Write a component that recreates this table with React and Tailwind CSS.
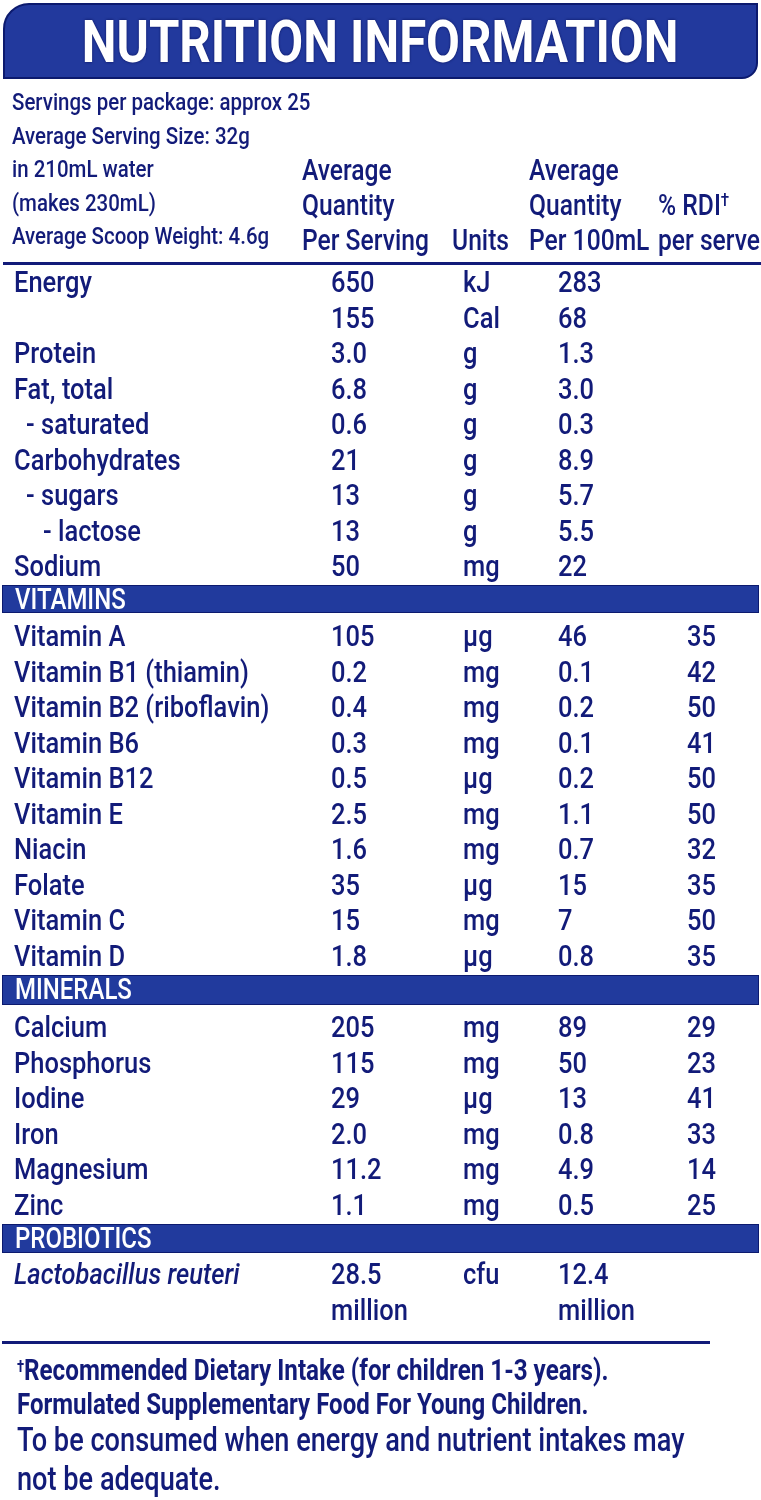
import React from "react";

const ROWS = [
  { label: "Energy", q: "650", u: "kJ", p: "283" },
  { label: "", q: "155", u: "Cal", p: "68" },
  { label: "Protein", q: "3.0", u: "g", p: "1.3" },
  { label: "Fat, total", q: "6.8", u: "g", p: "3.0" },
  { label: "- saturated", q: "0.6", u: "g", p: "0.3", indent: 1 },
  { label: "Carbohydrates", q: "21", u: "g", p: "8.9" },
  { label: "- sugars", q: "13", u: "g", p: "5.7", indent: 1 },
  { label: "- lactose", q: "13", u: "g", p: "5.5", indent: 2 },
  { label: "Sodium", q: "50", u: "mg", p: "22" },
];

const VITAMINS = [
  { label: "Vitamin A", q: "105", u: "µg", p: "46", r: "35" },
  { label: "Vitamin B1 (thiamin)", q: "0.2", u: "mg", p: "0.1", r: "42" },
  { label: "Vitamin B2 (riboflavin)", q: "0.4", u: "mg", p: "0.2", r: "50" },
  { label: "Vitamin B6", q: "0.3", u: "mg", p: "0.1", r: "41" },
  { label: "Vitamin B12", q: "0.5", u: "µg", p: "0.2", r: "50" },
  { label: "Vitamin E", q: "2.5", u: "mg", p: "1.1", r: "50" },
  { label: "Niacin", q: "1.6", u: "mg", p: "0.7", r: "32" },
  { label: "Folate", q: "35", u: "µg", p: "15", r: "35" },
  { label: "Vitamin C", q: "15", u: "mg", p: "7", r: "50" },
  { label: "Vitamin D", q: "1.8", u: "µg", p: "0.8", r: "35" },
];

const MINERALS = [
  { label: "Calcium", q: "205", u: "mg", p: "89", r: "29" },
  { label: "Phosphorus", q: "115", u: "mg", p: "50", r: "23" },
  { label: "Iodine", q: "29", u: "µg", p: "13", r: "41" },
  { label: "Iron", q: "2.0", u: "mg", p: "0.8", r: "33" },
  { label: "Magnesium", q: "11.2", u: "mg", p: "4.9", r: "14" },
  { label: "Zinc", q: "1.1", u: "mg", p: "0.5", r: "25" },
];

// narrow text: the label face is a condensed DIN, so squeeze Roboto sideways
const T = ({ children, s = "scale-x-[0.85]", className = "" }) => (
  <span className={`inline-block origin-left whitespace-nowrap ${s} ${className}`}>
    {children}
  </span>
);

const Row = ({ row }) => {
  const pad = row.indent === 2 ? "pl-[29px]" : row.indent === 1 ? "pl-[12px]" : "";
  return (
    <div className="grid h-[35.5px] grid-cols-[317px_132px_95px_129px_1fr] pl-[14px] text-[30px] leading-[35.5px]">
      <div className={pad}>
        <T>{row.label}</T>
      </div>
      <div>
        <T>{row.q}</T>
      </div>
      <div>
        <T>{row.u}</T>
      </div>
      <div>
        <T>{row.p}</T>
      </div>
      <div>
        <T>{row.r}</T>
      </div>
    </div>
  );
};

const Bar = ({ title, h }) => (
  <div className={`mx-[2px] ${h} border-[1.5px] border-[#0c1a6e] bg-[#213a9d] pl-[12px] text-[30px] leading-[26px] text-white`}>
    <T s="scale-x-[0.8]">{title}</T>
  </div>
);

export default function App() {
  return (
    <div className="h-[1500px] w-[761px] overflow-hidden bg-white font-medium font-[family-name:Roboto,sans-serif] text-[#121b79]">
      {/* title banner */}
      <div className="mx-[3px] mt-[3px] flex h-[76px] items-center justify-center rounded-tl-[26px] rounded-br-[16px] border-2 border-[#0c1a6e] bg-[#22399d]">
        <span className="inline-block scale-x-[0.833] whitespace-nowrap text-[59px] font-bold leading-none text-white drop-shadow-[0_0_1.5px_#0a1460]">
          NUTRITION INFORMATION
        </span>
      </div>

      {/* serving info + column heads */}
      <div className="flex h-[183px]">
        <div className="w-[302px] shrink-0 pl-[12px] pt-[6px] text-[24.5px] leading-[33.5px]">
          <div><T s="scale-x-[0.835]">Servings per package: approx 25</T></div>
          <div><T s="scale-x-[0.835]">Average Serving Size: 32g</T></div>
          <div><T s="scale-x-[0.835]">in 210mL water</T></div>
          <div><T s="scale-x-[0.835]">(makes 230mL)</T></div>
          <div><T s="scale-x-[0.835]">Average Scoop Weight: 4.6g</T></div>
        </div>
        <div className="flex w-[150px] shrink-0 flex-col justify-end pb-[4px] text-[29px] leading-[35px]">
          <div><T>Average</T></div>
          <div><T>Quantity</T></div>
          <div><T>Per Serving</T></div>
        </div>
        <div className="flex w-[77px] shrink-0 flex-col justify-end pb-[4px] text-[29px] leading-[35px]">
          <div><T>Units</T></div>
        </div>
        <div className="flex w-[129px] shrink-0 flex-col justify-end pb-[4px] text-[29px] leading-[35px]">
          <div><T>Average</T></div>
          <div><T>Quantity</T></div>
          <div><T>Per 100mL</T></div>
        </div>
        <div className="flex min-w-0 flex-1 flex-col justify-end pb-[4px] text-[29px] leading-[35px]">
          <div>
            <T>
              % RDI<sup className="text-[18px]">†</sup>
            </T>
          </div>
          <div><T>per serve</T></div>
        </div>
      </div>
      <div className="ml-[3px] h-[3px] bg-[#121b79]" />

      <div className="-mt-[1px]">
        {ROWS.map((r, i) => (
          <Row key={i} row={r} />
        ))}
      </div>

      <div className="mt-[1.5px]">
        <Bar title="VITAMINS" h="h-[28px]" />
      </div>
      <div className="pt-[5px]">
        {VITAMINS.map((r) => (
          <Row key={r.label} row={r} />
        ))}
      </div>

      <div className="mt-[2px]">
        <Bar title="MINERALS" h="h-[30px]" />
      </div>
      <div className="pt-[4px]">
        {MINERALS.map((r) => (
          <Row key={r.label} row={r} />
        ))}
      </div>

      <div className="mt-[2px]">
        <Bar title="PROBIOTICS" h="h-[29px]" />
      </div>
      <div className="grid grid-cols-[317px_132px_95px_129px_1fr] pl-[14px] pt-[3px] text-[30px] leading-[35.5px]">
        <div>
          <T className="italic">Lactobacillus reuteri</T>
        </div>
        <div>
          <div><T>28.5</T></div>
          <div><T>million</T></div>
        </div>
        <div>
          <T>cfu</T>
        </div>
        <div>
          <div><T>12.4</T></div>
          <div><T>million</T></div>
        </div>
        <div />
      </div>

      <div className="ml-[2px] mt-[14px] h-[3px] w-[708px] bg-[#121b79]" />

      {/* footnotes */}
      <div className="pl-[17px] pt-[9px]">
        <div className="text-[29.5px] font-bold leading-[34px]">
          <T s="scale-x-[0.82]">
            <sup className="text-[16px]">†</sup>Recommended Dietary Intake (for children 1-3 years).
          </T>
        </div>
        <div className="text-[29.5px] font-bold leading-[34px]">
          <T s="scale-x-[0.814]">Formulated Supplementary Food For Young Children.</T>
        </div>
        <div className="text-[33px] leading-[38.5px]">
          <T s="scale-x-[0.823]">To be consumed when energy and nutrient intakes may</T>
        </div>
        <div className="text-[33px] leading-[38.5px]">
          <T s="scale-x-[0.823]">not be adequate.</T>
        </div>
      </div>
    </div>
  );
}
